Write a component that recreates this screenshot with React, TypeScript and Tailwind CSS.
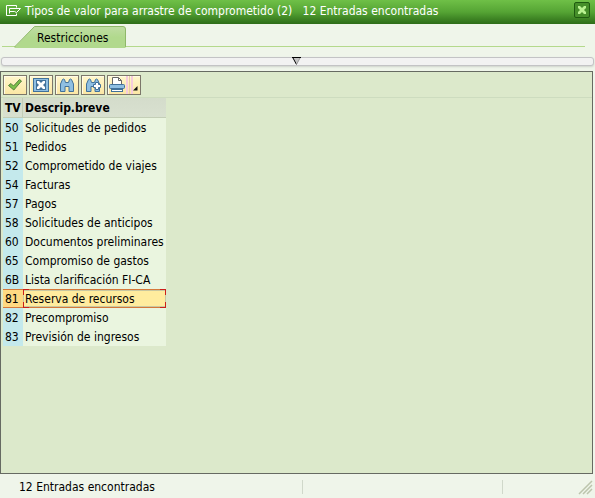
import type { ReactNode } from "react";

const ENTRIES: [string, string][] = [
  ["50", "Solicitudes de pedidos"],
  ["51", "Pedidos"],
  ["52", "Comprometido de viajes"],
  ["54", "Facturas"],
  ["57", "Pagos"],
  ["58", "Solicitudes de anticipos"],
  ["60", "Documentos preliminares"],
  ["65", "Compromiso de gastos"],
  ["6B", "Lista clarificación FI-CA"],
  ["81", "Reserva de recursos"],
  ["82", "Precompromiso"],
  ["83", "Previsión de ingresos"],
];

const SELECTED = "81";

function ToolButton({ label, wide, children }: { label: string; wide?: boolean; children: ReactNode }) {
  return (
    <button
      type="button"
      aria-label={label}
      className={`flex h-5 items-center justify-center border border-[#7c776a] bg-linear-to-b from-[#fff6cc] to-[#fbe7a4] shadow-[inset_1px_1px_0_#fffbe6] ${wide ? "w-[34px]" : "w-6"}`}
    >
      {children}
    </button>
  );
}

function CheckIcon() {
  return (
    <svg width="16" height="16" viewBox="0 0 16 16">
      <path d="M1.5 8.5 4 6.5 6.500 9 12.5 2.5 14.5 4 6.800 13Z" fill="#7cc04a" stroke="#55803a" strokeWidth="1" strokeLinejoin="round" />
    </svg>
  );
}

function CancelIcon() {
  return (
    <svg width="18" height="16" viewBox="0 0 18 16">
      <rect x="1.5" y="1.5" width="15" height="13" fill="#8fbfe2" stroke="#41719a" />
      <rect x="4" y="3" width="10" height="10" fill="#41719a" />
      <path d="M5 4h2l2 2 2-2h2v2l-2 2 2 2v2h-2l-2-2-2 2H5v-2l2-2-2-2Z" fill="#ffffff" />
    </svg>
  );
}

function Binoculars({ plus }: { plus?: boolean }) {
  return (
    <svg width="18" height="18" viewBox="0 0 18 18">
      <path
        d="M4.500 3.500q1-1 2 0l1 3h3l1-3q1-1 2 0l2 4.500v7.500h-4.500v-5h-4v5H2.500V8Z"
        fill="#8fbfe2"
        stroke="#41719a"
        strokeLinejoin="round"
      />
      {plus && (
        <path d="M11.500 6.500h3v2h2v3h-2v2h-3v-2h-2v-3h2Z" fill="#ffffff" stroke="#41719a" />
      )}
    </svg>
  );
}

function PrintIcon() {
  return (
    <svg width="32" height="18" viewBox="0 0 32 18">
      <rect x="18" y="0" width="2" height="18" fill="#f6cbdc" />
      <rect x="21" y="0" width="1" height="18" fill="#e8c9a8" />
      <rect x="23" y="0" width="2" height="18" fill="#f6cbdc" />
      <path d="M4.500 8.500v-7h6l3 3v4" fill="#ffffff" stroke="#666666" />
      <path d="M10.500 1.500v3h3" fill="none" stroke="#666666" />
      <rect x="1.500" y="8.500" width="15" height="4" rx="1" fill="#8fbfe2" stroke="#41719a" />
      <rect x="3.500" y="13.500" width="11" height="2" fill="#ffffff" stroke="#41719a" />
      <path d="M29.500 10v4.500H25Z" fill="#111111" />
    </svg>
  );
}

function TitleBar() {
  return (
    <header className="flex h-6 items-center bg-linear-to-b from-[#6fc047] via-[#55a434] to-[#2d6d18] pr-[5px] pb-0.5 pl-1.5 text-white">
      <svg width="16" height="12" viewBox="0 0 16 12" className="shrink-0" fill="none" stroke="#ffffff">
        <path d="M10.500 2.500v-2H.5v10h10v-2" />
        <path d="M3.500 8.500v-5h11l-4 4M4 3.500M3.500 6.500h5l2 1" />
      </svg>
      <h1 className="flex-1 pl-[3px] whitespace-pre">
        {"Tipos de valor para arrastre de comprometido (2)   12 Entradas encontradas"}
      </h1>
      <button
        type="button"
        aria-label="Cerrar"
        className="mt-0.5 flex size-4 items-center justify-center self-start rounded-xs border border-[#1f5a10] bg-[#468f2a]"
      >
        <svg width="10" height="10" viewBox="0 0 10 10">
          <path d="M1 1h2l2 2 2-2h2v2L7 5l2 2v2H7L5 7 3 9H1V7l2-2-2-2Z" fill="#b9f291" />
        </svg>
      </button>
    </header>
  );
}

function FilterTabs() {
  return (
    <nav className="mr-2.5 ml-0.5 h-[23px] border-b border-[#b4d98c] pt-0.5 pl-3">
      <button type="button" className="relative flex h-[22px] w-28 items-center pt-0.5 pl-[23px]">
        <svg className="absolute inset-0" width="112" height="22" viewBox="0 0 112 22">
          <defs>
            <linearGradient id="tab" x1="0" y1="0" x2="0" y2="1">
              <stop offset="0" stopColor="#c0dda4" />
              <stop offset="0.5" stopColor="#b1d98d" />
            </linearGradient>
          </defs>
          <path d="M0 22 20.500.5H109q2.500 0 2.500 2.500V22Z" fill="url(#tab)" />
          <path d="M.5 21 20.500.5H109q2.500 0 2.500 2.500V21" fill="none" stroke="#8fb869" />
        </svg>
        <span className="relative">Restricciones</span>
      </button>
    </nav>
  );
}

function Splitter() {
  return (
    <div className="mt-2.5 mr-px ml-px flex h-[9px] justify-center rounded-[3px] border border-[#c3c3c5] bg-[#f2f2f2] pr-0.5 shadow-[0_1px_2px_#cfd3cc]">
      <svg width="9" height="8" viewBox="0 0 9 8" className="-mt-px">
        <path d="M1 1h7L4.500 7.500Z" fill="#c4c4c4" />
        <path d="M0 .5h9M1 1 4.500 7.500" fill="none" stroke="#000000" />
        <path d="M8 1 4.500 7.500" stroke="#999999" />
      </svg>
    </div>
  );
}

function Toolbar() {
  return (
    <div className="flex h-[26px] gap-0.5 border-b border-[#cddcbf] pt-[3px] pl-0.5">
      <ToolButton label="Aceptar"><CheckIcon /></ToolButton>
      <ToolButton label="Cancelar"><CancelIcon /></ToolButton>
      <ToolButton label="Buscar"><Binoculars /></ToolButton>
      <ToolButton label="Continuar búsqueda"><Binoculars plus /></ToolButton>
      <ToolButton label="Imprimir" wide><PrintIcon /></ToolButton>
    </div>
  );
}

function EntryTable() {
  return (
    <div className="pl-0.5">
      <table className="w-[163px] table-fixed border-separate border-spacing-0 text-left">
        <colgroup>
          <col className="w-5" />
          <col />
        </colgroup>
        <thead>
          <tr className="h-5 bg-linear-to-b from-[#d4dccb] to-[#d9e1d0]">
            <th className="border-r border-b border-[#c3ceb6] pl-0.5">TV</th>
            <th className="border-b border-[#c3ceb6] pl-0.5">Descrip.breve</th>
          </tr>
        </thead>
        <tbody>
          {ENTRIES.map(([code, text]) =>
            code === SELECTED ? (
              <tr key={code} className="h-[19px]" aria-selected="true">
                <td className="border-y border-[#d5783a] bg-[#ffd982] pl-0.5">{code}</td>
                <td className="relative border-y border-[#d5783a] bg-[#ffec9e] pl-0.5 shadow-[inset_0_0_0_1px_#c9c7a0]">
                  {text}
                  <span className="absolute -top-px left-0 h-1.5 w-1.5 border-t border-l border-[#cc1f1a]" />
                  <span className="absolute -top-px right-0 h-1.5 w-1.5 border-t border-r border-[#cc1f1a]" />
                  <span className="absolute -bottom-px left-0 h-1.5 w-1.5 border-b border-l border-[#cc1f1a]" />
                  <span className="absolute right-0 -bottom-px h-1.5 w-1.5 border-r border-b border-[#cc1f1a]" />
                </td>
              </tr>
            ) : (
              <tr key={code} className="h-[19px]">
                <td className="bg-[#c4e9ec] pl-0.5">{code}</td>
                <td className="bg-[#eaf5df] pl-0.5">{text}</td>
              </tr>
            ),
          )}
        </tbody>
      </table>
    </div>
  );
}

function StatusBar() {
  return (
    <footer className="flex h-6 items-center justify-between pt-0.5 pl-[19px]">
      <span className="flex-1">12 Entradas encontradas</span>
      <span className="h-3.5 w-[200px] border-l border-[#d0d8ca]" />
      <span className="flex h-3.5 w-[93px] justify-end border-l border-[#d0d8ca] pr-px">
        <svg width="16" height="16" viewBox="0 0 16 16" stroke="#bcc5ad" strokeWidth="1.500">
          <path d="M1 14 14 1M5 14l9-9M9 14l5-5" />
        </svg>
      </span>
    </footer>
  );
}

export default function App() {
  return (
    <div className="flex min-h-screen flex-col bg-[#eff5ea] font-['DejaVu_Sans_Condensed','DejaVu_Sans',sans-serif] text-[12px] leading-4 text-black">
      <TitleBar />
      <FilterTabs />
      <Splitter />
      <main className="mt-[5px] mr-0.5 flex-1 border border-[#666a62] bg-[#dce9cb]">
        <Toolbar />
        <EntryTable />
      </main>
      <StatusBar />
    </div>
  );
}
